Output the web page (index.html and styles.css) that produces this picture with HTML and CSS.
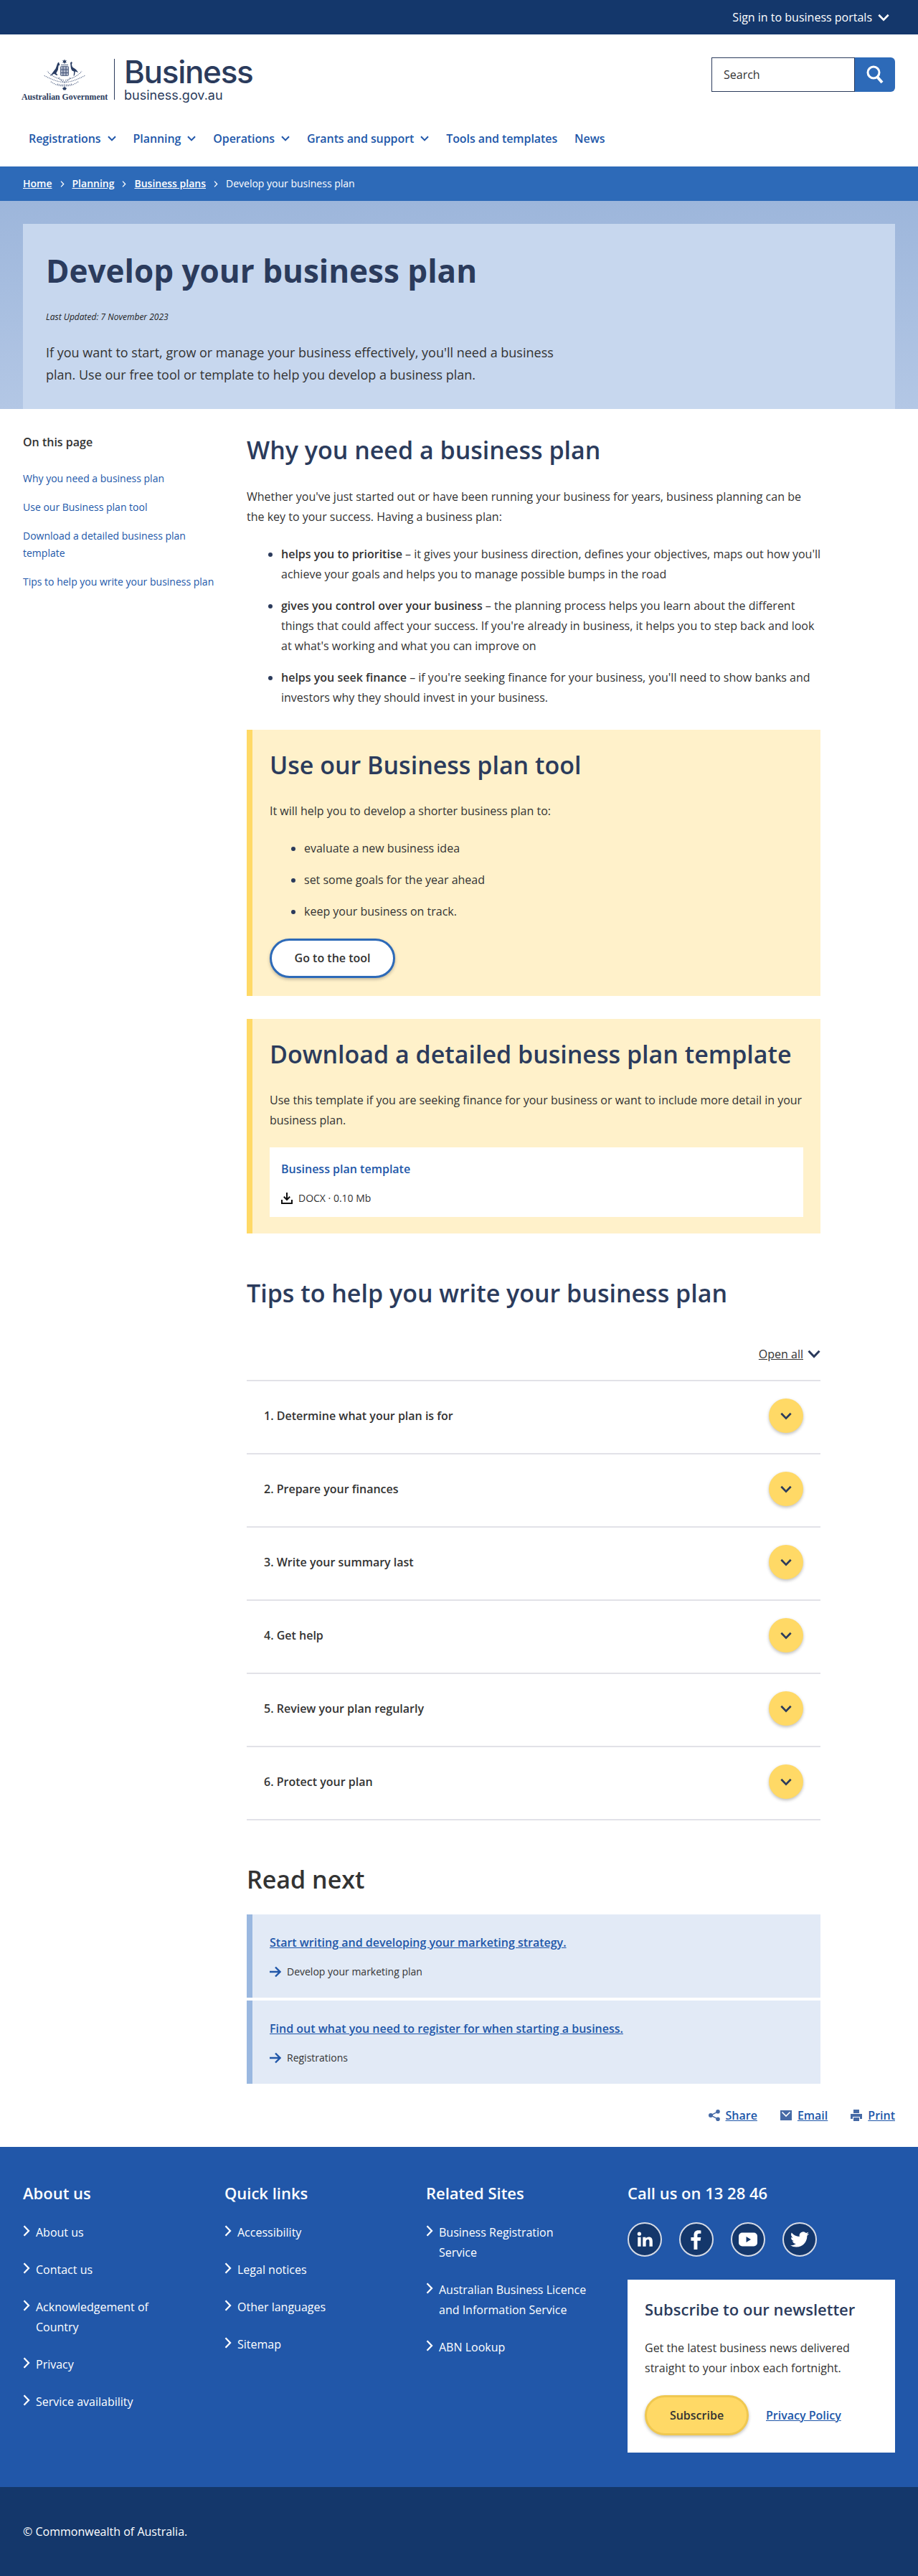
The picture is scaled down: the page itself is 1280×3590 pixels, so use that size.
FILE: index.html
```html
<!DOCTYPE html>
<html lang="en">
<head>
<meta charset="utf-8">
<title>Develop your business plan</title>
<link rel="stylesheet" href="styles.css">
</head>
<body>
<svg class="defs" width="0" height="0" aria-hidden="true">
  <symbol id="chev" viewBox="0 0 12 8"><path d="M1 1.200 6 6.400l5-5.200" fill="none" stroke="currentColor" stroke-width="2"/></symbol>
  <symbol id="chevr" viewBox="0 0 10 16"><path d="M1.500 1.200 8 8l-6.500 6.800" fill="none" stroke="currentColor" stroke-width="2.300"/></symbol>
  <symbol id="arrow" viewBox="0 0 16 16"><path d="M0 8h14M8 1.500 14.500 8 8 14.500" fill="none" stroke="currentColor" stroke-width="2.400"/></symbol>
</svg>

<header>
  <div class="topbar">
    <a class="signin">Sign in to business portals <svg class="signin-chev"><use href="#chev"/></svg></a>
  </div>
  <div class="brand-row">
    <div class="logo">
      <div class="gov">
        <svg class="crest" viewBox="0 0 60 44">
          <path d="M30 0.500l.9 2 2-.4-1.100 1.700 1.100 1.700-2-.3-.9 2-.9-2-2 .3 1.100-1.700-1.100-1.700 2 .4z" fill="#2a3d63"/>
          <path d="M25 8.500h10" stroke="#5a6a8a" stroke-width="1"/>
          <rect x="24.500" y="10.500" width="11" height="13" rx="1" fill="#aeb6c8" stroke="#3a4b70" stroke-width=".8"/>
          <path d="M25 15h10M25 19.500h10M28 11v12M32 11v12" stroke="#46567a" stroke-width="1"/>
          <path d="M22 4.500l-1.500 1.200c-1.500 3-2 6-3 8-2.500 3-4.500 6.500-8 10.300l3.500-1.800 2.300-1.500 3.500 2.300 1.700-.5-2.200-2.500 2.500-4.500.8-6 1.800-.7z" fill="#2a3d63"/>
          <path d="M38 5.500l1.800-1.500 1 1.200-.8 2.300c.2 2 .6 4 2.800 5.300 3.200 1.700 4.800 3.700 6.200 6.200l-4.200-1.500-.8 5.300-1.400 1.200.6-6.200-3-1.600c-2-3-1.400-6.500-2.200-10.900z" fill="#2a3d63"/>
          <g fill="none" stroke="#5f6e8e" stroke-width="1.100" stroke-dasharray="1.300 1.100">
            <path d="M30 33C20 32 10 28 1 23"/>
            <path d="M30 33c10-1 20-5 29-10"/>
            <path d="M29 30C20 27 12 25 6 17"/>
            <path d="M31 30c9-3 17-5 23-13"/>
            <path d="M30 38c-7 0-14-2-20-7"/>
            <path d="M30 38c7 0 14-2 20-7"/>
            <path d="M22 26c2 4 5 6 8 6s6-2 8-6"/>
            <path d="M20 35c3 1 6 2 10 1 4 1 7 0 10-1"/>
          </g>
          <path d="M27 41l3-2 3 2-1.500 2.500h-3z" fill="#2a3d63"/>
        </svg>
        <span class="gov-name">Australian Government</span>
      </div>
      <div class="logo-rule"></div>
      <div class="site">
        <span class="site-name">Business</span>
        <span class="site-url">business.gov.au</span>
      </div>
    </div>
    <form class="search">
      <div class="search-input">Search</div>
      <div class="search-btn">
        <svg width="24" height="26" viewBox="0 0 24 26"><circle cx="10" cy="10" r="8" fill="none" stroke="#fff" stroke-width="3"/><path d="M15.500 16.500 22 24" stroke="#fff" stroke-width="4"/></svg>
      </div>
    </form>
  </div>
  <nav class="mainnav">
    <a>Registrations <svg class="nav-chev"><use href="#chev"/></svg></a>
    <a>Planning <svg class="nav-chev"><use href="#chev"/></svg></a>
    <a>Operations <svg class="nav-chev"><use href="#chev"/></svg></a>
    <a>Grants and support <svg class="nav-chev"><use href="#chev"/></svg></a>
    <a>Tools and templates</a>
    <a>News</a>
  </nav>
</header>

<div class="crumbs">
  <a>Home</a><svg class="crumb-sep"><use href="#chevr"/></svg><a>Planning</a><svg class="crumb-sep"><use href="#chevr"/></svg><a>Business plans</a><svg class="crumb-sep"><use href="#chevr"/></svg><span>Develop your business plan</span>
</div>

<section class="hero">
  <div class="hero-box">
    <h1>Develop your business plan</h1>
    <p class="updated">Last Updated: 7 November 2023</p>
    <p class="intro">If you want to start, grow or manage your business effectively, you'll need a business plan. Use our free tool or template to help you develop a business plan.</p>
  </div>
</section>

<div class="page">
  <aside class="toc">
    <h2 class="toc-title">On this page</h2>
    <a>Why you need a business plan</a>
    <a>Use our Business plan tool</a>
    <a>Download a detailed business plan template</a>
    <a>Tips to help you write your business plan</a>
  </aside>
  <main class="content">
    <h2 class="h-lg">Why you need a business plan</h2>
    <p class="lead">Whether you've just started out or have been running your business for years, business planning can be the key to your success. Having a business plan:</p>
    <ul class="list">
      <li><b>helps you to prioritise</b> – it gives your business direction, defines your objectives, maps out how you'll achieve your goals and helps you to manage possible bumps in the road</li>
      <li><b>gives you control over your business</b> – the planning process helps you learn about the different things that could affect your success. If you're already in business, it helps you to step back and look at what's working and what you can improve on</li>
      <li><b>helps you seek finance</b> – if you're seeking finance for your business, you'll need to show banks and investors why they should invest in your business.</li>
    </ul>

    <section class="callout">
      <h2 class="h-lg">Use our Business plan tool</h2>
      <p class="lead">It will help you to develop a shorter business plan to:</p>
      <ul class="list">
        <li>evaluate a new business idea</li>
        <li>set some goals for the year ahead</li>
        <li>keep your business on track.</li>
      </ul>
      <a class="btn-outline">Go to the tool</a>
    </section>

    <section class="callout callout-2">
      <h2 class="h-lg">Download a detailed business plan template</h2>
      <p class="lead">Use this template if you are seeking finance for your business or want to include more detail in your business plan.</p>
      <div class="file">
        <a class="file-link">Business plan template</a>
        <div class="file-meta">
          <svg width="16" height="16" viewBox="0 0 16 16"><path d="M8 0v9M3.800 5.800 8 10l4.200-4.200M1 10v5h14v-5" fill="none" stroke="#111" stroke-width="2"/></svg>
          <span>DOCX · 0.10 Mb</span>
        </div>
      </div>
    </section>

    <h2 class="h-lg tips">Tips to help you write your business plan</h2>
    <div class="openall"><a>Open all</a><svg class="openall-chev"><use href="#chev"/></svg></div>
    <div class="accordion">
      <div class="acc-row"><span>1. Determine what your plan is for</span><span class="acc-btn"><svg class="acc-chev"><use href="#chev"/></svg></span></div>
      <div class="acc-row"><span>2. Prepare your finances</span><span class="acc-btn"><svg class="acc-chev"><use href="#chev"/></svg></span></div>
      <div class="acc-row"><span>3. Write your summary last</span><span class="acc-btn"><svg class="acc-chev"><use href="#chev"/></svg></span></div>
      <div class="acc-row"><span>4. Get help</span><span class="acc-btn"><svg class="acc-chev"><use href="#chev"/></svg></span></div>
      <div class="acc-row"><span>5. Review your plan regularly</span><span class="acc-btn"><svg class="acc-chev"><use href="#chev"/></svg></span></div>
      <div class="acc-row"><span>6. Protect your plan</span><span class="acc-btn"><svg class="acc-chev"><use href="#chev"/></svg></span></div>
    </div>

    <h2 class="h-lg readnext">Read next</h2>
    <div class="cards">
      <div class="card">
        <a class="card-link">Start writing and developing your marketing strategy.</a>
        <div class="card-sub"><svg class="card-arrow"><use href="#arrow"/></svg><span>Develop your marketing plan</span></div>
      </div>
      <div class="card">
        <a class="card-link">Find out what you need to register for when starting a business.</a>
        <div class="card-sub"><svg class="card-arrow"><use href="#arrow"/></svg><span>Registrations</span></div>
      </div>
    </div>
  </main>
</div>

<div class="actions">
  <a class="action"><svg width="16" height="16" viewBox="0 0 16 16"><g fill="#466aa6"><circle cx="13" cy="2.800" r="2.800"/><circle cx="13" cy="13.200" r="2.800"/><circle cx="3" cy="8" r="3"/></g><path d="M13 2.800 3 8l10 5.200" fill="none" stroke="#466aa6" stroke-width="1.500"/></svg><span>Share</span></a>
  <a class="action"><svg width="16" height="14" viewBox="0 0 16 14"><rect width="16" height="14" fill="#466aa6"/><path d="M2.500 2.500 8 8l5.500-5.500" fill="none" stroke="#fff" stroke-width="1.600"/></svg><span>Email</span></a>
  <a class="action"><svg width="16" height="16" viewBox="0 0 16 16"><path d="M4 0h8v5H4zM0 6h16v7h-3v-3H3v3H0zM4 11h8v5H4z" fill="#466aa6"/></svg><span>Print</span></a>
</div>

<footer>
  <div class="foot-main">
    <div class="foot-col">
      <h3>About us</h3>
      <ul class="foot-list">
        <li><svg class="foot-chev"><use href="#chevr"/></svg><a>About us</a></li>
        <li><svg class="foot-chev"><use href="#chevr"/></svg><a>Contact us</a></li>
        <li><svg class="foot-chev"><use href="#chevr"/></svg><a>Acknowledgement of Country</a></li>
        <li><svg class="foot-chev"><use href="#chevr"/></svg><a>Privacy</a></li>
        <li><svg class="foot-chev"><use href="#chevr"/></svg><a>Service availability</a></li>
      </ul>
    </div>
    <div class="foot-col">
      <h3>Quick links</h3>
      <ul class="foot-list">
        <li><svg class="foot-chev"><use href="#chevr"/></svg><a>Accessibility</a></li>
        <li><svg class="foot-chev"><use href="#chevr"/></svg><a>Legal notices</a></li>
        <li><svg class="foot-chev"><use href="#chevr"/></svg><a>Other languages</a></li>
        <li><svg class="foot-chev"><use href="#chevr"/></svg><a>Sitemap</a></li>
      </ul>
    </div>
    <div class="foot-col">
      <h3>Related Sites</h3>
      <ul class="foot-list">
        <li><svg class="foot-chev"><use href="#chevr"/></svg><a>Business Registration Service</a></li>
        <li><svg class="foot-chev"><use href="#chevr"/></svg><a>Australian Business Licence and Information Service</a></li>
        <li><svg class="foot-chev"><use href="#chevr"/></svg><a>ABN Lookup</a></li>
      </ul>
    </div>
    <div class="foot-col">
      <h3>Call us on 13 28 46</h3>
      <div class="socials">
        <a class="social"><svg width="26" height="26" viewBox="0 0 24 24" fill="#fff"><rect x="3" y="9" width="4" height="12"/><circle cx="5" cy="4.800" r="2.400"/><path d="M9.500 9h3.800v1.700c.6-1 1.900-2 3.800-2 3.900 0 4.900 2.500 4.900 5.800V21h-4v-5.800c0-1.500-.1-3.200-1.900-3.200-1.900 0-2.600 1.400-2.600 3.100V21h-4z"/></svg></a>
        <a class="social"><svg width="28" height="28" viewBox="0 0 24 24" fill="#fff"><path d="M9 24V13.500H5.500v-4H9V6.500C9 3 11 1 14.200 1c1.500 0 2.800.1 3.300.2v3.700h-2.200c-1.700 0-2.100.8-2.100 2v2.600h4.200l-.6 4h-3.600V24z"/></svg></a>
        <a class="social"><svg width="26" height="20" viewBox="0 0 26 20"><rect width="26" height="19" y=".5" rx="5" fill="#fff"/><path d="M10.500 6v8l6.500-4z" fill="#14376b"/></svg></a>
        <a class="social"><svg width="26" height="26" viewBox="0 0 24 24" fill="#fff"><path d="M23.953 4.570a10 10 0 01-2.825.775 4.958 4.958 0 002.163-2.723c-.951.555-2.005.959-3.127 1.184a4.920 4.920 0 00-8.384 4.482C7.690 8.095 4.067 6.130 1.640 3.162a4.822 4.822 0 00-.666 2.475c0 1.710.870 3.213 2.188 4.096a4.904 4.904 0 01-2.228-.616v.060a4.923 4.923 0 003.946 4.827 4.996 4.996 0 01-2.212.085 4.936 4.936 0 004.604 3.417 9.867 9.867 0 01-6.102 2.105c-.390 0-.779-.023-1.170-.067a13.995 13.995 0 007.557 2.209c9.053 0 13.998-7.496 13.998-13.985 0-.210 0-.420-.015-.630A9.935 9.935 0 0024 4.590z"/></svg></a>
      </div>
      <div class="news">
        <h3 class="news-title">Subscribe to our newsletter</h3>
        <p class="news-text">Get the latest business news delivered straight to your inbox each fortnight.</p>
        <div class="news-actions">
          <a class="btn-yellow">Subscribe</a>
          <a class="privacy">Privacy Policy</a>
        </div>
      </div>
    </div>
  </div>
  <div class="foot-base">© Commonwealth of Australia.</div>
</footer>
</body>
</html>
```

FILE: styles.css
```css
* { box-sizing: border-box; }
html, body { margin: 0; padding: 0; }
body { font-family: "Open Sans", "Noto Sans", sans-serif; font-size: 16px; line-height: 28px; color: #333; background: #fff; }
h1, h2, h3, p, ul { margin: 0; padding: 0; }
a { color: inherit; text-decoration: none; }
.defs { position: absolute; }

.topbar { height: 48px; background: #14376b; color: #fff; display: flex; justify-content: flex-end; align-items: center; padding-right: 40px; }
.signin { display: flex; align-items: center; font-weight: 500; line-height: 24px; }
.signin-chev { width: 16px; height: 11px; margin-left: 8px; }

.brand-row { display: flex; justify-content: space-between; padding: 32px 32px 0; height: 80px; }
.logo { display: flex; align-items: flex-start; padding-top: 2px; color: #2b3b5c; }
.gov { width: 116px; display: flex; flex-direction: column; align-items: center; }
.crest { width: 60px; height: 44px; display: block; }
.gov-name { font-family: "Liberation Serif", serif; font-weight: 700; font-size: 11.800px; line-height: 14px; margin-top: 2px; white-space: nowrap; }
.logo-rule { width: 1px; height: 57px; background: #2b3b5c; margin: 0 13px 0 11px; }
.site { display: flex; flex-direction: column; }
.site-name { font-family: Inter, "Liberation Sans", sans-serif; font-weight: 500; font-size: 44px; line-height: 36px; letter-spacing: -1.300px; }
.site-url { font-family: Inter, "Liberation Sans", sans-serif; font-size: 18px; line-height: 24px; margin-top: 3px; }

.search { display: flex; height: 48px; }
.search-input { width: 200px; border: 1px solid #2b3b5c; padding-left: 16px; line-height: 46px; background: #fff; }
.search-btn { width: 56px; background: #2d6ab8; border-radius: 0 6px 6px 0; display: flex; align-items: center; justify-content: center; }

.mainnav { height: 104px; display: flex; gap: 24px; padding: 53px 0 0 40px; font-weight: 600; letter-spacing: -0.080px; line-height: 24px; color: #2157a9; }
.mainnav a { display: flex; align-items: center; height: 24px; }
.nav-chev { width: 12px; height: 8px; margin-left: 9px; }

.crumbs { height: 48px; background: #2d6ab8; color: #fff; display: flex; align-items: center; padding-left: 32px; font-size: 14px; }
.crumbs a { font-weight: 600; text-decoration: underline; }
.crumb-sep { width: 6px; height: 9px; margin: 0 11px; }

.hero { height: 290px; padding: 32px 32px 0; background: linear-gradient(#9db6db, #b3c7e5); }
.hero-box { height: 258px; background: #c7d7ee; padding: 35px 32px 0; }
.hero-box h1 { font-size: 44px; line-height: 60px; font-weight: 700; color: #2b3b5c; }
.updated { font-size: 12px; font-style: italic; line-height: 20px; margin-top: 25px; color: #222; }
.intro { font-size: 18px; line-height: 31px; margin-top: 24px; width: 740px; }

.page { display: flex; padding: 0 136px 0 32px; }
.toc { width: 312px; padding: 34px 32px 0 0; flex: none; }
.toc-title { font-size: 16px; font-weight: 600; line-height: 24px; margin-bottom: 27px; }
.toc a { display: block; font-size: 14px; line-height: 24px; color: #2157a9; margin-bottom: 16px; }
.content { width: 800px; padding-top: 35px; }

.h-lg { font-size: 34px; line-height: 44px; font-weight: 600; color: #2b3b5c; }
.lead { margin-top: 29px; }
.list { margin-top: 24px; padding-left: 48px; }
.list li { margin-bottom: 16px; }
.list li:last-child { margin-bottom: 0; }
.list li::marker { color: #2b3b5c; }
.list b { font-weight: 600; }

.callout { margin-top: 31px; background: #fff1ca; border-left: 8px solid #ffd966; padding: 27px 24px 25px 24px; }
.callout-2 { margin-top: 32px; padding-bottom: 23px; }
.callout .lead { margin-top: 28px; }
.btn-outline { display: block; width: 175px; height: 55px; margin-top: 24px; border: 3px solid #2d6ab8; border-radius: 28px; background: #fff; text-align: center; line-height: 49px; font-weight: 600; box-shadow: 0 2px 4px rgba(0,0,0,.25); }
.file { margin-top: 24px; background: #fff; height: 97px; padding: 16px 16px 0; }
.file-link { display: block; color: #2157a9; font-weight: 600; line-height: 28px; }
.file-meta { display: flex; align-items: center; gap: 8px; margin-top: 15px; font-size: 14px; line-height: 24px; }

.tips { margin-top: 61px; }
.openall { display: flex; justify-content: flex-end; align-items: center; margin-top: 49px; margin-bottom: 22px; }
.openall a { text-decoration: underline; font-weight: 500; }
.openall-chev { width: 18px; height: 12px; margin-left: 6px; color: #2b3b5c; }

.accordion { border-top: 2px solid #e2e2e8; }
.acc-row { display: flex; justify-content: space-between; align-items: center; height: 102px; border-bottom: 2px solid #e2e2e8; padding: 0 24px 4px; font-weight: 600; }
.acc-btn { width: 48px; height: 48px; border-radius: 50%; background: #ffd966; display: flex; align-items: center; justify-content: center; box-shadow: 0 2px 4px rgba(0,0,0,.25); color: #2b3b5c; }
.acc-chev { width: 16px; height: 11px; }

.tips + .openall + .accordion + .readnext { margin-top: 60px; color: #333; }
.cards { margin-top: 27px; display: flex; flex-direction: column; gap: 4px; }
.card { height: 116px; background: #e2eaf6; border-left: 8px solid #9ab8e0; padding: 25px 24px 0; }
.card-link { display: block; color: #2157a9; font-weight: 600; text-decoration: underline; }
.card-sub { display: flex; align-items: center; gap: 8px; margin-top: 15px; font-size: 14px; line-height: 24px; }
.card-arrow { width: 16px; height: 16px; color: #2157a9; }

.actions { display: flex; justify-content: flex-end; gap: 32px; padding: 32px 32px; font-weight: 600; line-height: 24px; color: #2157a9; }
.action { display: flex; align-items: center; gap: 8px; }
.action span { text-decoration: underline; }

.foot-main { height: 474px; background: #2157a9; color: #fff; display: grid; grid-template-columns: repeat(4, 281px); padding: 50px 32px 0; }
.foot-col h3 { font-size: 22px; line-height: 28px; font-weight: 600; }
.foot-list { list-style: none; margin-top: 27px; }
.foot-list li { position: relative; padding-left: 18px; margin-bottom: 24px; width: 226px; }
.foot-chev { position: absolute; left: 0; top: 4px; width: 10px; height: 16px; }
.socials { display: flex; gap: 24px; margin-top: 27px; }
.social { width: 48px; height: 48px; border-radius: 50%; background: #14376b; border: 2px solid #d6dbe6; display: flex; align-items: center; justify-content: center; }
.news { width: 373px; height: 241px; margin-top: 32px; background: #fff; padding: 27px 24px 0; color: #333; }
.foot-col .news-title { color: #2b3b5c; }
.news-text { margin-top: 26px; }
.news-actions { display: flex; align-items: center; gap: 24px; margin-top: 24px; }
.btn-yellow { display: block; width: 145px; height: 56px; border: 3px solid #f0c850; border-radius: 28px; background: #ffd966; text-align: center; line-height: 50px; font-weight: 600; box-shadow: 0 2px 4px rgba(0,0,0,.25); }
.privacy { color: #2157a9; font-weight: 600; text-decoration: underline; }
.foot-base { height: 124px; background: #14376b; color: #fff; display: flex; align-items: center; padding-left: 32px; }
```
